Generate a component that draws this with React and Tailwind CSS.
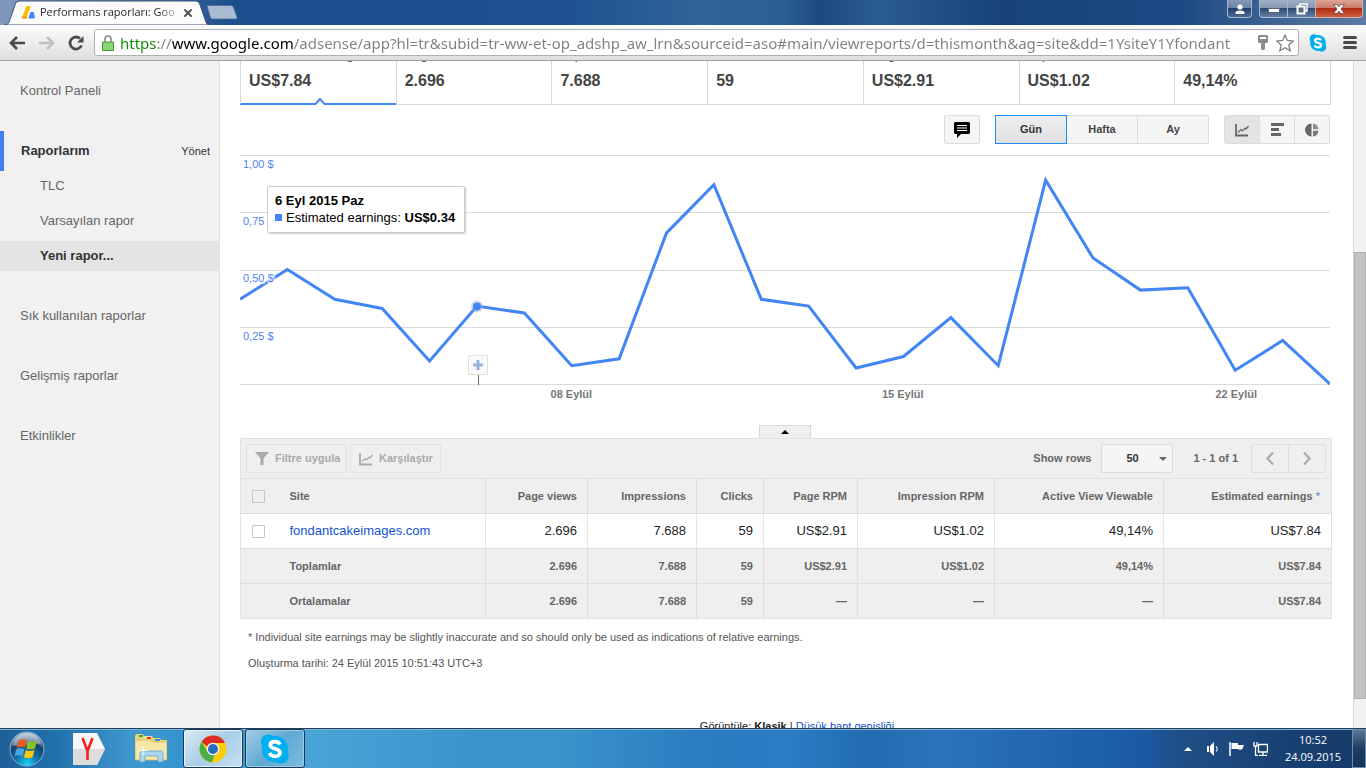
import { X } from 'lucide-react'

const url =
  'https://www.google.com/adsense/app?hl=tr&subid=tr-ww-et-op_adshp_aw_lrn&sourceid=aso#main/viewreports/d=thismonth&ag=site&dd=1YsiteY1Yfondant'

const metrics = [
  { label: 'Estimated earnings', value: 'US$7.84', active: true },
  { label: 'Page views', value: '2.696' },
  { label: 'Impressions', value: '7.688' },
  { label: 'Clicks', value: '59' },
  { label: 'Page RPM', value: 'US$2.91' },
  { label: 'Impression RPM', value: 'US$1.02' },
  { label: 'Active View Viewable', value: '49,14%' },
]

// one value per day, 1 - 24 September
const earnings = [
  0.37, 0.5, 0.37, 0.33, 0.1, 0.34, 0.31, 0.08, 0.11, 0.66, 0.87, 0.37, 0.34, 0.07, 0.12, 0.29, 0.08, 0.89, 0.55,
  0.41, 0.42, 0.06, 0.19, 0,
]

const headers = ['Page views', 'Impressions', 'Clicks', 'Page RPM', 'Impression RPM', 'Active View Viewable']
const siteRow = ['2.696', '7.688', '59', 'US$2.91', 'US$1.02', '49,14%', 'US$7.84']
const summaryRows = [
  { name: 'Toplamlar', cells: ['2.696', '7.688', '59', 'US$2.91', 'US$1.02', '49,14%', 'US$7.84'] },
  { name: 'Ortalamalar', cells: ['2.696', '7.688', '59', '—', '—', '—', 'US$7.84'] },
]

function SkypeIcon({ className }) {
  return (
    <svg viewBox="0 0 30 30" className={className}>
      <path
        d="M8 .5c2 0 3.600.6 5 1.500C21 .8 28.500 7 28 15.500c0 1-.1 1.500-.3 2.300 3 5.500-1 11.700-6.700 11.700-2 0-3.500-.5-4.800-1.400C8.500 29 1.700 23 2 15c0-.8.1-1.600.3-2.400C-1 7 2.500.5 8 .5z"
        fill="#00aff0"
      />
      <path
        d="M20 10.500c-1-2.200-3-2.900-5.200-2.900-2.600 0-4.500 1.200-4.500 3.500 0 4.800 9.700 2.500 9.700 7.300 0 2.400-2 3.900-4.900 3.900-2.500 0-4.600-1-5.500-3.400"
        fill="none"
        stroke="#fff"
        strokeWidth="3.800"
      />
    </svg>
  )
}

function LineIcon({ className }) {
  return (
    <svg viewBox="0 0 14 14" className={className} fill="none" stroke="currentColor">
      <path d="M1 1v11.500h12" strokeWidth="1.800" />
      <path d="M3 9.500l3-3 1.500 1.300L10 5l1 1 2.500-3" strokeWidth="1.200" />
    </svg>
  )
}

function TitleBar() {
  return (
    <div className="flex h-[25px] justify-between overflow-hidden bg-[linear-gradient(90deg,#8098bd_0,#5f7fac_100px,#1d4f8c_230px,#1d528f_560px,#2e6499_700px,#2b6096_780px,#1c4a80_820px,#2a5c90_880px,#17427a_1000px,#1d4a84_1180px,#5d7ba2_100%)]">
      <div className="flex items-start pl-1">
        <div className="relative h-[25px] w-[206px]">
          <svg viewBox="0 0 206 25" className="absolute inset-0 h-full w-full">
            <path d="M0 25c5 0 5-3 6.500-7L11 5c1-3 2-4 5-4h175c3 0 4 1 5 4l4.500 13c1.500 4 1.500 7 5.500 7z" fill="#fbfbfb" stroke="#3c5578" strokeWidth="1" />
          </svg>
          <div className="relative flex h-[25px] items-center pl-[18px]">
            <svg viewBox="0 0 13 13" className="h-[13px] w-[13px]">
              <path d="M4.500 0h4.300L4.500 12.500H.8Q-.3 12.500.2 11z" fill="#fbbc05" />
              <path d="M.3 10.500h4.900l-.7 2H.8Q-.2 12.300.3 10.500z" fill="#f29900" />
              <path d="M8.500 6h3.200l1.200 5.500q.2 1-1 1H6.200z" fill="#4285f4" />
            </svg>
            <span className="ml-[5px] w-[138px] overflow-hidden bg-[linear-gradient(90deg,#222_118px,#bbb_136px)] bg-clip-text font-['Open_Sans',sans-serif] text-[11px] whitespace-nowrap text-transparent">
              Performans raporları: Goo
            </span>
            <button aria-label="Sekmeyi kapat" className="ml-1 text-[#555]">
              <X className="h-3 w-3" strokeWidth={4} />
            </button>
          </div>
        </div>
        <button aria-label="Yeni sekme" className="-ml-1 pt-[5px]">
          <svg viewBox="0 0 31 15" className="h-[15px] w-[31px]">
            <path d="M1 .5h23c2 0 3 .5 3.500 2L31 12c.4 1.500 0 2-1 2H7c-1.500 0-2.200-.6-2.800-2z" fill="#a9bbd1" stroke="#46658f" strokeWidth=".7" />
          </svg>
        </button>
      </div>
      <div className="flex items-start pr-[3px]">
        <button aria-label="Kullanıcı" className="mr-[7px] flex h-[18px] w-[25px] items-center justify-center rounded-b border border-t-0 border-[#aab9cf] bg-[linear-gradient(#8598b5_0,#6a81a3_50%,#23406b_50%,#4d6a92_100%)]">
          <svg viewBox="0 0 10 10" className="h-[10px] w-[10px]" fill="#fff">
            <circle cx="5" cy="3" r="2.600" />
            <path d="M.5 10V8.500Q1 6.500 5 6.500t4.500 2V10z" />
          </svg>
        </button>
        <button aria-label="Simge durumuna küçült" className="flex h-[18px] w-[29px] items-end justify-center rounded-bl border border-t-0 border-[#aab9cf] bg-[linear-gradient(#a0b0c7_0,#8195b2_50%,#2f4b73_50%,#6580a3_100%)] pb-[4px]">
          <span className="h-[5px] w-[12px] border border-[#55647a] bg-white" />
        </button>
        <button aria-label="Önceki boyut" className="flex h-[18px] w-[27px] items-center justify-center border-b border-[#aab9cf] bg-[linear-gradient(#a0b0c7_0,#8195b2_50%,#2f4b73_50%,#6580a3_100%)]">
          <svg viewBox="0 0 12 12" className="h-3 w-3" fill="#5b6b83" stroke="#fff" strokeWidth="1.500">
            <path d="M4 1h7v7H4z" />
            <path d="M1.500 3.500h7v7h-7z" strokeWidth="2" />
          </svg>
        </button>
        <button aria-label="Kapat" className="flex h-[18px] w-[48px] items-center justify-center rounded-br border border-t-0 border-[#cdb1b4] bg-[linear-gradient(#dba597_0,#cc7867_50%,#b02b16_50%,#d0603b_100%)]">
          <svg viewBox="0 0 12 10" className="h-[10px] w-3" fill="#fff" stroke="#5d4a52" strokeWidth=".8">
            <path d="M.5.500h3.300L6 2.800 8.200.5h3.300L8 5l3.500 4.500H8.200L6 7.200 3.800 9.500H.5L4 5z" />
          </svg>
        </button>
      </div>
    </div>
  )
}

function Toolbar() {
  return (
    <div className="flex h-9 items-center border-b border-[#a0a0a0] bg-[linear-gradient(#fcfcfc,#dfdfdf)] pl-[9px] pr-[9px]">
      <button aria-label="Geri" className="text-[#4a4a4a]">
        <svg viewBox="0 0 16 14" className="h-[14px] w-4" fill="none" stroke="currentColor" strokeWidth="2.600">
          <path d="M16 7H2.500M8 1L2 7l6 6" />
        </svg>
      </button>
      <button aria-label="İleri" className="ml-[14px] text-[#c0c0c0]">
        <svg viewBox="0 0 16 14" className="h-[14px] w-4" fill="none" stroke="currentColor" strokeWidth="2.600">
          <path d="M0 7h13.500M8 1l6 6-6 6" />
        </svg>
      </button>
      <button aria-label="Yenile" className="ml-[13px] text-[#4a4a4a]">
        <svg viewBox="0 0 16 16" className="h-4 w-4" fill="none" stroke="currentColor" strokeWidth="2.800">
          <path d="M13.500 10.500A6 6 0 1 1 12 3.500" />
          <path d="M15.500 1v6.500H9z" fill="currentColor" stroke="none" />
        </svg>
      </button>
      <div className="ml-[10px] flex h-[27px] min-w-0 flex-1 items-center rounded-[3px] border border-[#b0b0b0] bg-white pl-[7px] pr-1">
        <svg viewBox="0 0 12 16" className="h-4 w-3 shrink-0">
          <path d="M3 8V4a3 3 0 0 1 6 0v4" fill="none" stroke="#8a8a8a" strokeWidth="1.600" />
          <path d="M.5 7h11v8.500H.5z" fill="#8fd474" stroke="#4c9a35" />
        </svg>
        <input
          aria-label="Adres"
          defaultValue={url}
          className="ml-[6px] h-6 min-w-0 flex-1 bg-[linear-gradient(90deg,#0b8a00_0,#0b8a00_36px,#808080_36px,#808080_51px,#000_51px,#000_174px,#808080_174px)] bg-clip-text font-['Noto_Sans',sans-serif] text-[15px] leading-[24px] text-transparent outline-none"
        />
        <svg viewBox="0 0 10 15" className="ml-[6px] h-[15px] w-[10px] shrink-0" fill="#8c8c8c">
          <path fillRule="evenodd" d="M1 0h8l1 1v6L9 8H7v6l-1 1H4l-1-1V8H1L0 7V1zm1 2v2h6V2z" />
        </svg>
        <svg viewBox="0 0 18 18" className="ml-2 h-[18px] w-[18px] shrink-0" fill="#fff" stroke="#808080" strokeWidth="1.300">
          <path d="M9 1l2.300 5.500 6 .5-4.500 3.900 1.400 5.900L9 13.700l-5.200 3.100 1.400-5.900L.7 7l6-.5z" />
        </svg>
      </div>
      <button aria-label="Skype" className="ml-[10px]">
        <SkypeIcon className="h-[18px] w-[18px]" />
      </button>
      <button aria-label="Menü" className="ml-[16px] flex w-[14px] flex-col gap-[2px]">
        <span className="h-[3px] rounded-sm bg-[#4a4a4a]" />
        <span className="h-[3px] rounded-sm bg-[#4a4a4a]" />
        <span className="h-[3px] rounded-sm bg-[#4a4a4a]" />
      </button>
    </div>
  )
}

function Sidebar() {
  return (
    <nav className="w-[220px] shrink-0 border-r border-[#e2e2e2] bg-[#f1f1f1] pt-[10px] text-[13px] text-[#666]">
      <a href="#home" className="flex h-10 items-center pl-5">Kontrol Paneli</a>
      <div className="mt-5 flex h-10 items-center justify-between border-l-4 border-[#427fed] pl-[17px] pr-[9px]">
        <a href="#reports" className="font-bold text-[#333]">Raporlarım</a>
        <a href="#manage" className="text-[11px] text-[#333]">Yönet</a>
      </div>
      <div className="flex flex-col gap-[5px]">
        <a href="#tlc" className="flex h-[30px] items-center pl-10">TLC</a>
        <a href="#default" className="flex h-[30px] items-center pl-10">Varsayılan rapor</a>
        <a href="#new" className="flex h-[30px] items-center bg-[#e4e4e4] pl-10 font-bold text-[#333]">Yeni rapor...</a>
      </div>
      <div className="mt-[25px] flex flex-col gap-5">
        <a href="#common" className="flex h-10 items-center pl-5">Sık kullanılan raporlar</a>
        <a href="#advanced" className="flex h-10 items-center pl-5">Gelişmiş raporlar</a>
        <a href="#events" className="flex h-10 items-center pl-5">Etkinlikler</a>
      </div>
    </nav>
  )
}

function Metrics() {
  return (
    <div className="-mt-[14px] grid grid-cols-7 border-r border-[#d9d9d9]">
      {metrics.map((m) => (
        <div
          key={m.label}
          className={
            m.active
              ? 'relative h-[58px] border-b-2 border-l border-b-[#4285f4] border-l-[#d9d9d9] pl-2'
              : 'h-[58px] border-b border-l border-[#d9d9d9] pl-2'
          }
        >
          <div className="h-5 text-[13px] leading-[16px] whitespace-nowrap text-[#444]">{m.label}</div>
          <div className="text-[16px] leading-[28px] font-bold text-[#444]">{m.value}</div>
          {m.active && (
            <svg viewBox="0 0 14 8" className="absolute -bottom-[2px] left-[72px] h-2 w-[14px]">
              <path d="M2 8l5-6 5 6z" fill="#fff" />
              <path d="M0 7h2.500L7 2l4.500 5H14" fill="none" stroke="#4285f4" strokeWidth="2" />
            </svg>
          )}
        </div>
      ))}
    </div>
  )
}

function ChartControls() {
  return (
    <div className="mt-[10px] flex justify-end gap-[15px] text-[11px] font-bold text-[#444]">
      <button aria-label="Notlar" className="flex h-[29px] w-9 items-center justify-center rounded-[2px] border border-[#dcdcdc] bg-[#f5f5f5]">
        <svg viewBox="0 0 16 16" className="h-4 w-4">
          <path d="M1 0h14l1 1v10l-1 1H7l-4 4v-4H1l-1-1V1z" />
          <path d="M3 3.500h10M3 6h10M3 8.500h10" stroke="#fff" />
        </svg>
      </button>
      <div className="flex h-[29px]">
        <button className="w-[72px] border border-[#1a8cff] bg-[linear-gradient(#eee,#e0e0e0)] text-[#333]">Gün</button>
        <button className="w-[71px] border-y border-r border-[#dcdcdc] bg-[#f5f5f5]">Hafta</button>
        <button className="w-[71px] rounded-r-[2px] border-y border-r border-[#dcdcdc] bg-[#f5f5f5]">Ay</button>
      </div>
      <div className="flex h-[29px] rounded-[2px] border border-[#dcdcdc] bg-[#f5f5f5] text-[#666]">
        <button aria-label="Çizgi grafik" className="flex w-[35px] items-center justify-center border-r border-[#dcdcdc] bg-[#e4e4e4]">
          <LineIcon className="h-[14px] w-[14px]" />
        </button>
        <button aria-label="Çubuk grafik" className="flex w-[35px] items-center justify-center border-r border-[#dcdcdc]">
          <svg viewBox="0 0 13 13" className="h-[13px] w-[13px]" fill="currentColor">
            <path d="M0 0h13v3H0zM0 5h8v3H0zM0 10h10v3H0z" />
          </svg>
        </button>
        <button aria-label="Pasta grafik" className="flex w-[34px] items-center justify-center">
          <svg viewBox="0 0 14 14" className="h-[14px] w-[14px]" fill="currentColor">
            <path d="M6.500.5v13a6.500 6.500 0 0 1 0-13z" />
            <path d="M8 .5A6.500 6.500 0 0 1 13.500 6.300H8z" opacity=".7" />
            <path d="M8 7.700h5.500A6.500 6.500 0 0 1 8 13.500z" opacity=".85" />
          </svg>
        </button>
      </div>
    </div>
  )
}

function Chart() {
  const points = earnings.map((v, i) => `${(i * 1090) / 23},${229 - v * 229}`).join(' ')

  return (
    <div className="mt-[11px]">
      <div className="relative h-[230px]">
        <svg viewBox="0 0 1090 230" preserveAspectRatio="none" className="absolute inset-0 h-full w-full">
          <path d="M0 .5h1090M0 57.500h1090M0 115.500h1090M0 172.500h1090M0 229.500h1090" stroke="#dadada" />
          <polyline points={points} fill="none" stroke="#4285f4" strokeWidth="3" />
          <path d="M238.500 220v10" stroke="#666" />
          <circle cx="237" cy="151.500" r="6" fill="#9db4d8" opacity=".5" />
          <circle cx="237" cy="151.500" r="4" fill="#4285f4" />
        </svg>
        <div className="relative flex flex-col pl-[3px] text-[11px] leading-[19px] text-[#4f83ee] [text-shadow:0_0_2px_#fff,1px_0_1px_#fff,-1px_0_1px_#fff,0_1px_1px_#fff,0_-1px_1px_#fff,2px_2px_1px_#fff]">
          <span className="h-[57px]">1,00 $</span>
          <span className="h-[57px]">0,75 $</span>
          <span className="h-[58px]">0,50 $</span>
          <span>0,25 $</span>
        </div>
        <div className="absolute left-[27px] top-[31px] rounded-[2px] border border-[#ccc] bg-white pt-[5px] pb-[6px] pl-[7px] pr-[9px] text-[13px] leading-[17px] whitespace-nowrap text-black shadow-[1px_1px_2px_#ccc]">
          <div className="font-bold">6 Eyl 2015 Paz</div>
          <div className="flex items-center">
            <span className="mr-1 h-[7px] w-[7px] bg-[#4285f4]" />
            <span>
              Estimated earnings: <b>US$0.34</b>
            </span>
          </div>
        </div>
        <button aria-label="Not ekle" className="absolute left-[21.750%] top-[200px] flex h-5 w-5 -translate-x-[9px] items-center justify-center border border-[#e0e0e0] bg-[#fafafa]">
          <svg viewBox="0 0 10 10" className="h-[10px] w-[10px]">
            <path d="M3.500 0h3v3.500H10v3H6.500V10h-3V6.500H0v-3h3.500z" fill="#94b6de" />
          </svg>
        </button>
      </div>
      <div className="flex text-[11px] leading-[19px] font-bold text-[#777]">
        <span className="ml-[15.200%] w-[30.400%] text-center">08 Eylül</span>
        <span className="w-[30.400%] text-center">15 Eylül</span>
        <span className="ml-[7%] w-[16.800%] text-center">22 Eylül</span>
      </div>
    </div>
  )
}

function TableToolbar() {
  return (
    <div className="flex h-10 items-center justify-between border-x border-t border-[#e2e2e2] bg-[#efefef] px-[5px] text-[11px] font-bold text-[#666]">
      <div className="flex gap-[3px] text-[#aaa]">
        <button className="flex h-[29px] w-[101px] items-center rounded-[2px] border border-[#e2e2e2] pl-2">
          <svg viewBox="0 0 14 13" className="mr-[6px] h-[13px] w-[14px]" fill="currentColor">
            <path d="M0 0h14L8.500 6.500V13h-3V6.500z" />
          </svg>
          Filtre uygula
        </button>
        <button className="flex h-[29px] w-[91px] items-center rounded-[2px] border border-[#e2e2e2] pl-2">
          <LineIcon className="mr-[6px] h-[14px] w-[14px]" />
          Karşılaştır
        </button>
      </div>
      <div className="flex items-center">
        <label htmlFor="rows">Show rows</label>
        <div className="relative ml-[10px]">
          <select
            id="rows"
            defaultValue="50"
            className="block h-[29px] w-[72px] appearance-none rounded-[2px] border border-[#dcdcdc] bg-[#f5f5f5] pl-6 text-[11px] font-bold text-[#333]"
          >
            <option>50</option>
            <option>100</option>
          </select>
          <svg viewBox="0 0 8 4" className="pointer-events-none absolute right-[6px] top-[13px] h-1 w-2" fill="#666">
            <path d="M0 0h8L4 4z" />
          </svg>
        </div>
        <span className="ml-5 whitespace-nowrap">1 - 1 of 1</span>
        <div className="ml-[13px] flex h-[29px] rounded-[2px] border border-[#e0e0e0] text-[#aaa]">
          <button aria-label="Önceki" className="flex w-[37px] items-center justify-center border-r border-[#e0e0e0]">
            <svg viewBox="0 0 8 13" className="h-[13px] w-2" fill="none" stroke="currentColor" strokeWidth="2.200">
              <path d="M7 .5l-5.500 6 5.500 6" />
            </svg>
          </button>
          <button aria-label="Sonraki" className="flex w-[36px] items-center justify-center">
            <svg viewBox="0 0 8 13" className="h-[13px] w-2" fill="none" stroke="currentColor" strokeWidth="2.200">
              <path d="M1 .5l5.500 6L1 12.500" />
            </svg>
          </button>
        </div>
      </div>
    </div>
  )
}

function ReportTable() {
  return (
    <table className="w-full table-fixed border-collapse border border-[#e2e2e2] bg-[#efefef] text-right text-[11px] text-[#666]">
      <colgroup>
        <col className="w-9" />
        <col />
        <col className="w-[102px]" />
        <col className="w-[109px]" />
        <col className="w-[67px]" />
        <col className="w-[94px]" />
        <col className="w-[137px]" />
        <col className="w-[169px]" />
        <col className="w-[168px]" />
      </colgroup>
      <thead>
        <tr className="h-[35px]">
          <th>
            <input type="checkbox" aria-label="Tümünü seç" className="ml-[11px] block h-[13px] w-[13px] appearance-none rounded-[1px] border border-[#c6c6c6]" />
          </th>
          <th className="pl-[13px] text-left">Site</th>
          {headers.map((h) => (
            <th key={h} className="border-l border-[#dedede] pr-[10px] whitespace-nowrap">{h}</th>
          ))}
          <th className="border-l border-[#dedede] pr-[11px] whitespace-nowrap">
            Estimated earnings <span className="font-normal text-[#4a7cc0]">*</span>
          </th>
        </tr>
      </thead>
      <tbody>
        <tr className="h-[35px] border-y border-[#dedede] bg-white text-[13px] text-[#222]">
          <td>
            <input type="checkbox" aria-label="fondantcakeimages.com" className="ml-[11px] block h-[13px] w-[13px] appearance-none rounded-[1px] border border-[#c6c6c6]" />
          </td>
          <td className="pl-[13px] text-left">
            <a href="#site" className="text-[#1155cc]">fondantcakeimages.com</a>
          </td>
          {siteRow.map((v, i) => (
            <td key={i} className="border-l border-[#e6e6e6] pr-[10px]">{v}</td>
          ))}
        </tr>
        {summaryRows.map((row) => (
          <tr key={row.name} className="h-[35px] border-t border-[#dedede] font-bold">
            <td />
            <td className="pl-[13px] text-left">{row.name}</td>
            {row.cells.map((v, i) => (
              <td key={i} className="border-l border-[#dedede] pr-[10px]">{v}</td>
            ))}
          </tr>
        ))}
      </tbody>
    </table>
  )
}

function Taskbar() {
  return (
    <footer className="flex h-10 shrink-0 items-stretch justify-between border-t border-[#23405a] bg-[linear-gradient(90deg,#1f5f98_0,#2272ad_60px,#3f97cf_130px,#3293cd_200px,#4ba4d6_310px,#3a93cb_480px,#3a93cb_560px,#2a7dc0_700px,#2a7cc4_790px,#226cb0_870px,#2a74bb_940px,#1a5aa4_1140px,#1f4f87_1180px,#173f70_1300px,#143a68_100%)] font-['Open_Sans',sans-serif] text-white shadow-[inset_0_1px_0_#7fb4d8]">
      <div className="flex items-center">
        <button aria-label="Başlat" className="ml-[9px]">
          <svg viewBox="0 0 36 36" className="h-9 w-9">
            <defs>
              <radialGradient id="orb" cx=".5" cy=".95" r=".9">
                <stop offset="0" stopColor="#17d8ff" />
                <stop offset=".35" stopColor="#1278ad" />
                <stop offset=".7" stopColor="#12426c" />
                <stop offset="1" stopColor="#a9b9c8" />
              </radialGradient>
            </defs>
            <circle cx="18" cy="18" r="17" fill="url(#orb)" stroke="#7fb3d3" />
            <path d="M3.500 14C6 6 12 2.500 18 2.500S30 6 32.500 14C24 10 12 18 3.500 14z" fill="#fff" opacity=".35" />
            <path d="M9.500 9.500c3-1.800 5.500-1.700 8.200-.2l-1.900 7.500c-2.700-1.400-5-1.500-8.100.1z" fill="#ea5a24" />
            <path d="M19 10c2.800 1.500 5.500 1.600 9 0l-2.100 7.400c-3 1.500-5.700 1.500-8.700.1z" fill="#84c225" />
            <path d="M7.300 18.200c3-1.600 5.500-1.400 8.100 0l-2 7.300c-2.500-1.500-5-1.600-8-.1z" fill="#4aa3df" />
            <path d="M16.800 18.900c2.800 1.500 5.500 1.500 8.700 0l-2 7.300c-3.200 1.600-6 1.400-8.600 0z" fill="#fdc513" />
          </svg>
        </button>
        <button aria-label="Yandex" className="ml-7">
          <svg viewBox="0 0 32 32" className="h-8 w-8">
            <path d="M0 0h24l8 16-8 16H0z" fill="#f6f6f6" />
            <path d="M0 16h32l-8 16H0z" fill="#dcdcdc" />
            <path d="M9.500 5l5 13v9M19.500 5l-5 13" fill="none" stroke="#e22" strokeWidth="2.600" />
          </svg>
        </button>
        <button aria-label="Dosya Gezgini" className="ml-[30px]">
          <svg viewBox="0 0 32 30" className="h-[30px] w-8">
            <path d="M0 2l1-2h7l1 2h7v4H0z" fill="#e9d27a" />
            <path d="M4 1h4v2H4z" fill="#27a844" />
            <path d="M8 4l1-2h8l1 2h7v4H8z" fill="#f2de8f" />
            <path d="M12 3h4v2h-4z" fill="#d93a2b" />
            <path d="M16 6l1-2h8l1 2h6v20H16z" fill="#efd67c" />
            <path d="M20 5h5v2h-5z" fill="#3a8ad8" />
            <path d="M0 6h16l2 2h14v18H0z" fill="#f6e7a6" stroke="#d8b95a" strokeWidth=".8" />
            <path d="M5 28V19c0-1 1-2 2-2h19c1 0 2 1 2 2v9h-5v-6H10v6z" fill="#a9d5ee" stroke="#5fa6cf" strokeWidth=".8" />
            <path d="M8 12v9M3.500 16.500h9" stroke="#fff" />
          </svg>
        </button>
        <button aria-label="Chrome" className="ml-4 flex h-[39px] w-[60px] items-center justify-center rounded-[3px] border border-[#16395a] bg-[linear-gradient(135deg,#dcebf5,#a9cde6_50%,#c5dff0)] shadow-[inset_0_0_0_1px_#e8f4fb]">
          <svg viewBox="0 0 30 30" className="h-7 w-7">
            <circle cx="15" cy="15" r="14.500" fill="#ffce08" />
            <path d="M28 8.500H15a6.500 6.500 0 0 0-6 4L2.800 7.200A14.500 14.500 0 0 1 28 8.500z" fill="#dd2d22" />
            <path d="M2.800 7.200L9.400 18.500A6.500 6.500 0 0 0 17 21.200l-3.300 8.200A14.500 14.500 0 0 1 2.800 7.200z" fill="#4caf45" />
            <circle cx="15" cy="15" r="6.800" fill="#f4f4f4" />
            <circle cx="15" cy="15" r="5.400" fill="#2a6bbf" />
          </svg>
        </button>
        <button aria-label="Skype" className="ml-[2px] flex h-[39px] w-[60px] items-center justify-center rounded-[3px] border border-[#16395a] bg-[linear-gradient(135deg,#a5cde6,#5fa9d3_50%,#7ebbde)] shadow-[inset_0_0_0_1px_#9fcbe4]">
          <SkypeIcon className="h-[30px] w-[30px]" />
        </button>
      </div>
      <div className="flex items-center">
        <button aria-label="Gizli simgeleri göster">
          <svg viewBox="0 0 8 4" className="h-1 w-2" fill="#fff">
            <path d="M0 4h8L4 0z" />
          </svg>
        </button>
        <button aria-label="Ses" className="ml-[15px]">
          <svg viewBox="0 0 13 14" className="h-[14px] w-[13px]">
            <path d="M0 4h2v6H0zM3 4l4-4v14l-4-4z" fill="#fff" />
            <path d="M9 4.500q2.500 2.500 0 5" fill="none" stroke="#cfe3f3" strokeWidth="1.200" />
          </svg>
        </button>
        <button aria-label="İşlem Merkezi" className="ml-[9px]">
          <svg viewBox="0 0 15 14" className="h-[14px] w-[15px]">
            <path d="M1 0v14" stroke="#fff" strokeWidth="1.500" />
            <path d="M2.500 1H9v2h6c-1 1.500-1 3-2 4.500H9V7H2.500z" fill="#fff" />
          </svg>
        </button>
        <button aria-label="Ağ" className="ml-[9px]">
          <svg viewBox="0 0 15 14" className="h-[14px] w-[15px]" fill="none" stroke="#fff" strokeWidth="1.300">
            <path d="M5.500 2.500h9v7.500h-9zM10 10v3M6 13.300h8" />
            <path d="M1 0v4h3V0M2.500 4v9.300H5" />
          </svg>
        </button>
        <div className="ml-[17px] w-[56px] pb-[2px] text-center text-[11px] leading-[17px] whitespace-nowrap">
          <div>10:52</div>
          <div>24.09.2015</div>
        </div>
        <button aria-label="Masaüstünü göster" className="ml-[11px] h-[39px] w-[14px] border border-[#6f8eae] bg-[linear-gradient(#5b7796,#1e3c60_50%,#14345c)]" />
      </div>
    </footer>
  )
}

export default function App() {
  return (
    <div className="flex h-screen flex-col overflow-hidden bg-white font-['Liberation_Sans',Arial,sans-serif]">
      <header className="shrink-0">
        <TitleBar />
        <Toolbar />
      </header>
      <div className="flex min-h-0 flex-1">
        <Sidebar />
        <main className="min-w-0 flex-1 overflow-hidden pl-5 pr-[21px]">
          <div className="pr-px">
            <Metrics />
          </div>
          <div className="pr-[2px]">
            <ChartControls />
            <Chart />
          </div>
          <div className="mt-[21px] flex justify-center pr-[2px]">
            <button aria-label="Grafiği gizle" className="flex h-[13px] w-[52px] items-center justify-center border border-b-0 border-[#d9d9d9] bg-[#efefef]">
              <svg viewBox="0 0 8 4" className="h-1 w-2">
                <path d="M0 4h8L4 0z" />
              </svg>
            </button>
          </div>
          <TableToolbar />
          <ReportTable />
          <div className="pl-2 pt-[10px] text-[11px] leading-[16px] text-[#555]">
            <p>* Individual site earnings may be slightly inaccurate and so should only be used as indications of relative earnings.</p>
            <p className="mt-[10px]">Oluşturma tarihi: 24 Eylül 2015 10:51:43 UTC+3</p>
          </div>
          <p className="mt-[47px] pl-[22px] text-center text-[11px] leading-[16px] text-[#222]">
            Görüntüle: <b>Klasik</b> | <a href="#low" className="text-[#1155cc]">Düşük bant genişliği</a>
          </p>
        </main>
        <div className="w-[13px] shrink-0 border-l border-[#d6d6d6] bg-[#f1f1f1] pt-[191px]">
          <div className="h-[447px] border border-[#b0b0b0] bg-[#c3c3c3]" />
        </div>
      </div>
      <Taskbar />
    </div>
  )
}
